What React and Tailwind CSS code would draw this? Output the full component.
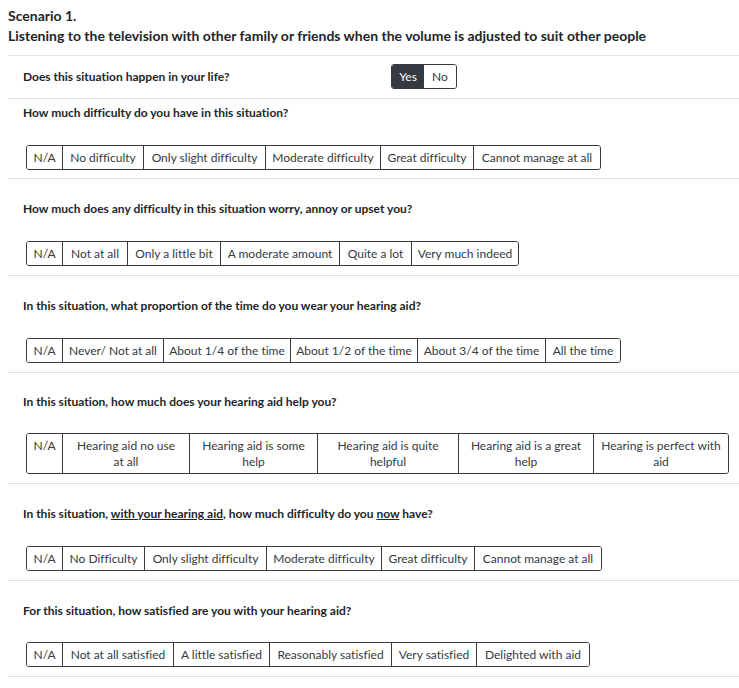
import React, { useState } from 'react';

// Scenario questionnaire: each question is a row with a segmented button group
const QUESTIONS = [
    {
        id: 'difficulty',
        label: 'How much difficulty do you have in this situation?',
        space: 'pt-[5px] pb-[8px]',
        gap: 'mt-[23px]',
        options: [
            { text: 'N/A', w: 'w-[35px]' },
            { text: 'No difficulty', w: 'w-[81px]' },
            { text: 'Only slight difficulty', w: 'w-[122px]' },
            { text: 'Moderate difficulty', w: 'w-[115px]' },
            { text: 'Great difficulty', w: 'w-[93px]' },
            { text: 'Cannot manage at all', w: 'w-[127px]' },
        ],
    },
    {
        id: 'worry',
        label: 'How much does any difficulty in this situation worry, annoy or upset you?',
        space: 'pt-[21px] pb-[9px]',
        gap: 'mt-[23px]',
        options: [
            { text: 'N/A', w: 'w-[35px]' },
            { text: 'Not at all', w: 'w-[65px]' },
            { text: 'Only a little bit', w: 'w-[93px]' },
            { text: 'A moderate amount', w: 'w-[119px]' },
            { text: 'Quite a lot', w: 'w-[72px]' },
            { text: 'Very much indeed', w: 'w-[107px]' },
        ],
    },
    {
        id: 'wear',
        label: 'In this situation, what proportion of the time do you wear your hearing aid?',
        space: 'pt-[21px] pb-[9px]',
        gap: 'mt-[23px]',
        options: [
            { text: 'N/A', w: 'w-[35px]' },
            { text: 'Never/ Not at all', w: 'w-[101px]' },
            { text: 'About 1/4 of the time', w: 'w-[127px]' },
            { text: 'About 1/2 of the time', w: 'w-[127px]' },
            { text: 'About 3/4 of the time', w: 'w-[128px]' },
            { text: 'All the time', w: 'w-[75px]' },
        ],
    },
    {
        id: 'help',
        label: 'In this situation, how much does your hearing aid help you?',
        space: 'pt-[20px] pb-[9px]',
        gap: 'mt-[22px]',
        wrap: true,
        options: [
            { text: 'N/A', w: 'w-[35px]' },
            { text: 'Hearing aid no use at all', w: 'w-[127px]', pad: 'px-[10px]' },
            { text: 'Hearing aid is some help', w: 'w-[128px]', pad: 'px-[12px]' },
            { text: 'Hearing aid is quite helpful', w: 'w-[141px]', pad: 'px-[14px]' },
            { text: 'Hearing aid is a great help', w: 'w-[135px]', pad: 'px-[5px]' },
            { text: 'Hearing is perfect with aid', w: 'w-[135px]', pad: 'px-[6px]' },
        ],
    },
    {
        id: 'now',
        label: (
            <>
                In this situation, <span className="underline">with your hearing aid</span>, how much difficulty do
                you <span className="underline">now</span> have?
            </>
        ),
        space: 'pt-[21px] pb-[9px]',
        gap: 'mt-[23px]',
        options: [
            { text: 'N/A', w: 'w-[35px]' },
            { text: 'No Difficulty', w: 'w-[82px]' },
            { text: 'Only slight difficulty', w: 'w-[122px]' },
            { text: 'Moderate difficulty', w: 'w-[115px]' },
            { text: 'Great difficulty', w: 'w-[93px]' },
            { text: 'Cannot manage at all', w: 'w-[127px]' },
        ],
    },
    {
        id: 'satisfied',
        label: 'For this situation, how satisfied are you with your hearing aid?',
        space: 'pt-[21px] pb-[9px]',
        gap: 'mt-[22px]',
        options: [
            { text: 'N/A', w: 'w-[35px]' },
            { text: 'Not at all satisfied', w: 'w-[111px]' },
            { text: 'A little satisfied', w: 'w-[96px]' },
            { text: 'Reasonably satisfied', w: 'w-[122px]' },
            { text: 'Very satisfied', w: 'w-[85px]' },
            { text: 'Delighted with aid', w: 'w-[113px]' },
        ],
    },
];

const ButtonGroup = ({ options, value, onChange, wrap }) => (
    <div className="flex w-fit rounded-[3px] border border-[#343a40] overflow-hidden">
        {options.map((opt, i) => (
            <button
                key={opt.text}
                onClick={() => onChange(opt.text)}
                className={`${opt.w} ${opt.pad || 'px-[4px]'} ${i > 0 ? 'border-l border-[#343a40]' : ''} ${
                    value === opt.text ? 'bg-[#343a40] text-white' : 'bg-white text-[#343a40]'
                } ${wrap ? '' : 'whitespace-nowrap'} flex justify-center text-center py-[3.5px] text-[12px] leading-4`}
            >
                {opt.text}
            </button>
        ))}
    </div>
);

const App = () => {
    const [happens, setHappens] = useState('Yes');
    const [answers, setAnswers] = useState({});

    return (
        <div
            className="bg-white min-h-screen pl-2 text-[#212529] [font-variant-ligatures:none]"
            style={{ fontFamily: 'Lato, "Open Sans", sans-serif' }}
        >
            {/* Scenario heading */}
            <div className="pt-[6px] pb-[9px] text-[14px] leading-5 font-bold">
                <div>Scenario 1.</div>
                <div>Listening to the television with other family or friends when the volume is adjusted to suit other people</div>
            </div>

            {/* Happens in life */}
            <div className="flex items-center border-t border-[#dee2e6] px-[15px] pt-2 pb-[9px]">
                <div className="w-[368px] text-[12px] leading-[18px] font-bold">Does this situation happen in your life?</div>
                <div className="flex rounded-[3px] border border-[#343a40] overflow-hidden">
                    {['Yes', 'No'].map((opt) => (
                        <button
                            key={opt}
                            onClick={() => setHappens(opt)}
                            className={`w-[32px] py-[3.5px] text-[12px] leading-4 ${
                                happens === opt ? 'bg-[#343a40] text-white' : 'bg-white text-[#343a40]'
                            }`}
                        >
                            {opt}
                        </button>
                    ))}
                </div>
            </div>

            {QUESTIONS.map((q) => (
                <div key={q.id} className={`border-t border-[#dee2e6] px-[15px] ${q.space}`}>
                    <div className="text-[12px] leading-[18px] font-bold">{q.label}</div>
                    <div className={`${q.gap} pl-[3px]`}>
                        <ButtonGroup
                            options={q.options}
                            value={answers[q.id]}
                            wrap={q.wrap}
                            onChange={(v) => setAnswers({ ...answers, [q.id]: v })}
                        />
                    </div>
                </div>
            ))}
            <div className="border-t border-[#dee2e6]" />
        </div>
    );
};

export default App;
